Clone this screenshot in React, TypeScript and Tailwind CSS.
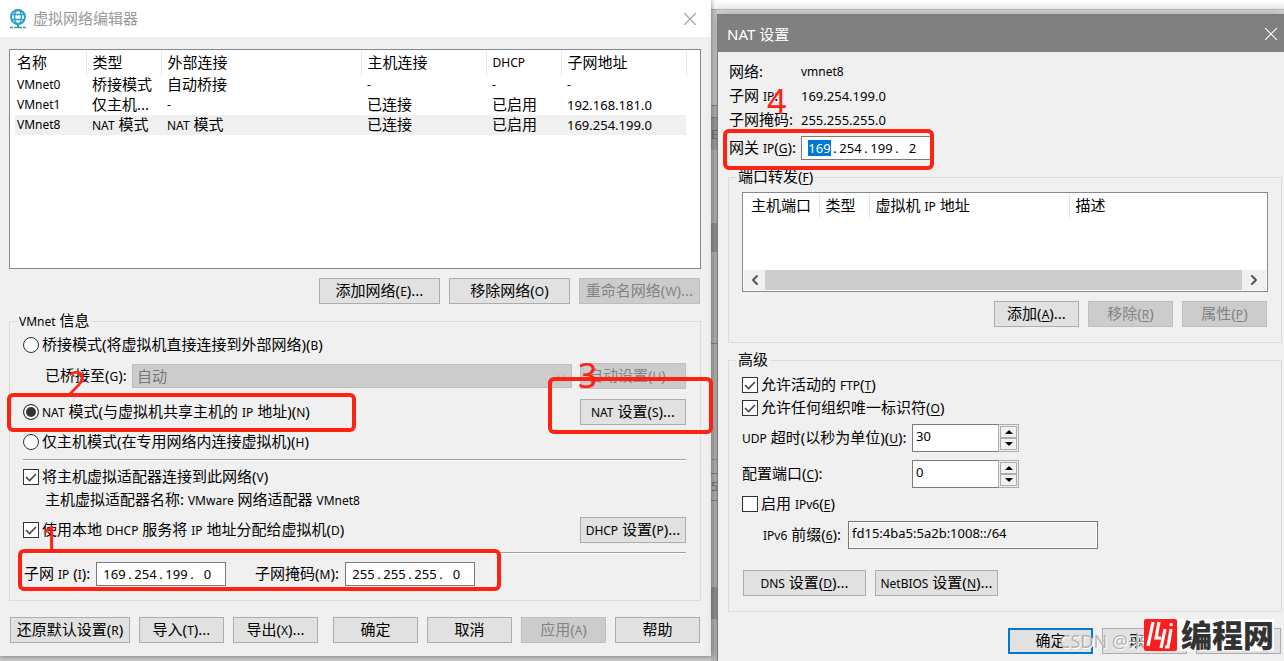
import type { ReactNode } from "react";
import { ChevronDown, ChevronLeft, ChevronRight } from "lucide-react";
import clsx from "clsx";

const adapters = [
  ["VMnet0", "桥接模式", "自动桥接", "-", "-", "-"],
  ["VMnet1", "仅主机...", "-", "已连接", "已启用", "192.168.181.0"],
  ["VMnet8", "NAT 模式", "NAT 模式", "已连接", "已启用", "169.254.199.0"],
];

const adapterColumns = [
  { label: "名称", width: "w-[71px]" },
  { label: "类型", width: "w-[75px]" },
  { label: "外部连接", width: "w-[200px]" },
  { label: "主机连接", width: "w-[125px]" },
  { label: "DHCP", width: "w-[75px]" },
  { label: "子网地址", width: "w-[125px]" },
];

// Chinese runs and punctuation are set larger than Latin ones; "&X" marks an access key
function Txt({ children }: { children: string }) {
  const parts = children.split(/([\u4e00-\u9fff(): ]+|\.{3}|&\w|\d[\d.]{6,})/).filter(Boolean);
  return (
    <span className="leading-4 whitespace-pre">
      {parts.map((part, i) => {
        if (part.startsWith("&")) return <u key={i} className="underline-offset-2">{part.slice(1)}</u>;
        if (/^[\u4e00-\u9fff(): .]/.test(part)) return <span key={i} className="text-[15px] leading-4">{part}</span>;
        if (/^\d[\d.]{6,}/.test(part)) return <span key={i} className="text-[13px] leading-4">{part}</span>;
        return part;
      })}
    </span>
  );
}

interface ButtonProps {
  children: string;
  className?: string;
  disabled?: boolean;
  primary?: boolean;
}

function Button({ children, className = "w-[85px]", disabled, primary }: ButtonProps) {
  return (
    <button
      type="button"
      disabled={disabled}
      className={clsx(
        "flex h-[26px] shrink-0 items-center justify-center",
        primary ? "border-2 border-[#0078d7]" : "border",
        disabled
          ? "border-[#bfbfbf] bg-[#cccccc] text-[#838383]"
          : "bg-[#e1e1e1]",
        !disabled && !primary && "border-[#adadad]",
        className,
      )}
    >
      <Txt>{children}</Txt>
    </button>
  );
}

function Radio({ children, checked }: { children: string; checked?: boolean }) {
  return (
    <label className="flex items-center gap-[3px]">
      <input
        type="radio"
        name="mode"
        defaultChecked={checked}
        className="size-4 shrink-0 appearance-none rounded-full border border-[#333333] bg-white checked:bg-[#333333] checked:shadow-[inset_0_0_0_2px_white]"
      />
      <Txt>{children}</Txt>
    </label>
  );
}

function Check({ children, checked }: { children: string; checked?: boolean }) {
  return (
    <label className="flex items-center gap-[3px]">
      <span className="relative size-4 shrink-0">
        <input
          type="checkbox"
          defaultChecked={checked}
          className="peer block size-4 appearance-none border border-[#333333] bg-white"
        />
        <svg
          viewBox="0 0 16 16"
          className="pointer-events-none absolute inset-0 hidden size-4 peer-checked:block"
        >
          <path d="M3 8l3.5 3.5L13 5" fill="none" stroke="#444" strokeWidth="1.6" />
        </svg>
      </span>
      <Txt>{children}</Txt>
    </label>
  );
}

interface IpBoxProps {
  id: string;
  value: string;
  selected?: number;
}

function IpBox({ id, value, selected }: IpBoxProps) {
  return (
    <div className="flex h-6 w-[130px] shrink-0 items-center border border-[#7a7a7a] bg-white pl-1 text-[13px] leading-4">
      {value.split(".").map((octet, i) => (
        <div key={i} className="flex items-center">
          {i > 0 && <span className="w-1 text-center">.</span>}
          <input
            id={i === 0 ? id : undefined}
            aria-label={i === 0 ? undefined : `${id} ${i + 1}`}
            defaultValue={octet}
            className={clsx(
              "mx-0.5 h-4 w-[23px] text-center leading-4 outline-none",
              selected === i && "bg-[#0078d7] text-white",
            )}
          />
        </div>
      ))}
    </div>
  );
}

function Spinner({ id, value }: { id: string; value: string }) {
  return (
    <div className="flex h-7 w-[107px]">
      <input
        id={id}
        defaultValue={value}
        className="min-w-0 flex-1 border border-r-0 border-[#7a7a7a] bg-white pb-1 pl-[3px] text-[13px] outline-none"
      />
      <div className="flex w-[21px] flex-col border border-[#abadb3] p-px">
        <button type="button" aria-label="+" className="flex flex-1 items-center justify-center border border-[#acacac]">
          <svg viewBox="0 0 8 4" className="h-1 w-2"><path d="M0 4L4 0l4 4z" /></svg>
        </button>
        <button type="button" aria-label="-" className="flex flex-1 items-center justify-center border border-[#acacac]">
          <svg viewBox="0 0 8 4" className="h-1 w-2"><path d="M0 0l4 4 4-4z" /></svg>
        </button>
      </div>
    </div>
  );
}

function Group({ title, className, children }: { title: string; className?: string; children: ReactNode }) {
  return (
    <fieldset className={clsx("min-w-0 border border-[#dcdcdc]", className)}>
      <legend className="-ml-1.5 flex h-5 items-center px-0.5">
        <Txt>{title}</Txt>
      </legend>
      {children}
    </fieldset>
  );
}

function CloseIcon() {
  return (
    <svg viewBox="0 0 12 12" className="size-3">
      <path d="M0 0l12 12M12 0L0 12" stroke="currentColor" strokeWidth="1.1" />
    </svg>
  );
}

function GlobeIcon() {
  return (
    <svg viewBox="0 0 18 20" className="h-5 w-[18px]" fill="none" stroke="#2a9fd0">
      <circle cx="9" cy="8" r="7" strokeWidth="2" />
      <ellipse cx="9" cy="8" rx="3.4" ry="7" strokeWidth="1.4" />
      <path d="M2.5 5.5h13M2.5 10.5h13" strokeWidth="1.4" />
      <path d="M9 15v3" strokeWidth="2" />
      <path d="M1 18.5h3M5 18.5h8M14 18.5h3" stroke="#2ba88c" strokeWidth="1.5" />
    </svg>
  );
}

function Divider() {
  return <hr className="h-0.5 border-t border-b border-t-[#a0a0a0] border-b-white" />;
}

function Mark({ className }: { className: string }) {
  return (
    <div className={clsx("pointer-events-none absolute z-20 rounded-md border-4 border-[#ff2112]", className)} />
  );
}

function MarkNumber({ children, className }: { children: string; className: string }) {
  return (
    <span className={clsx("pointer-events-none absolute z-20 text-[34px] leading-[34px] text-[#ff2112]", className)}>
      {children}
    </span>
  );
}

function NetworkEditor() {
  return (
    <section className="relative min-w-0 self-start bg-[#f0f0f0] shadow-[0_0_6px_rgba(0,0,0,0.5)]">
      <header className="flex h-[37px] items-center bg-white pr-[15px] pl-[9px] text-[#999999]">
        <GlobeIcon />
        <h1 className="ml-1.5 flex-1"><Txt>虚拟网络编辑器</Txt></h1>
        <button type="button" aria-label="关闭"><CloseIcon /></button>
      </header>

      <div className="pt-3 pr-2.5 pb-[13px] pl-[9px]">
        <div className="h-[220px] border border-[#828790] bg-white pt-px pr-3.5 pl-[5px]">
          <table className="w-full table-fixed text-left leading-4">
            <thead>
              <tr className="h-6">
                {adapterColumns.map(({ label, width }, i) => (
                  <th
                    key={label}
                    className={clsx("border-r border-[#e5e5e5] font-normal", i === 0 ? "pl-0.5" : "pl-1.5", width)}
                  >
                    <Txt>{label}</Txt>
                  </th>
                ))}
              </tr>
            </thead>
            <tbody>
              {adapters.map((row) => (
                <tr key={row[0]} className={clsx("h-5", row[0] === "VMnet8" && "bg-[#f0f0f0]")}>
                  {row.map((cell, i) => (
                    <td key={i} className={i === 0 ? "pl-0.5" : "pl-1.5"}>
                      <Txt>{cell}</Txt>
                    </td>
                  ))}
                </tr>
              ))}
            </tbody>
          </table>
        </div>

        <div className="mt-[9px] flex justify-end gap-[9px] pr-px">
          <Button className="w-[121px]">添加网络(E)...</Button>
          <Button className="w-[121px]">移除网络(O)</Button>
          <Button className="w-[121px]" disabled>重命名网络(W)...</Button>
        </div>

        <Group title="VMnet 信息" className="mt-[7px] pr-3.5 pb-3.5 pl-[13px]">
          <div className="mt-0.5 flex h-6 items-center">
            <Radio>桥接模式(将虚拟机直接连接到外部网络)(B)</Radio>
          </div>
          <div className="mt-1.5 flex h-[26px] items-center">
            <label htmlFor="bridge" className="w-[109px] shrink-0 pl-[22px]"><Txt>已桥接至(G):</Txt></label>
            <div className="relative min-w-0 flex-1">
              <select
                id="bridge"
                disabled
                className="block h-6 w-full appearance-none border border-[#bfbfbf] bg-[#cccccc] pl-1 text-[15px] leading-5 text-[#777777] opacity-100"
              >
                <option>自动</option>
              </select>
              <ChevronDown className="absolute top-1.5 right-1 size-3.5 text-[#a0a0a0]" strokeWidth={1.5} />
            </div>
            <Button className="ml-2 w-[106px]" disabled>自动设置(U)...</Button>
          </div>
          <div className="mt-2.5 flex h-[26px] items-center justify-between">
            <Radio checked>NAT 模式(与虚拟机共享主机的 IP 地址)(N)</Radio>
            <Button className="w-[106px]">NAT 设置(S)...</Button>
          </div>
          <div className="mt-[5px] mb-[5px] flex h-6 items-center">
            <Radio>仅主机模式(在专用网络内连接虚拟机)(H)</Radio>
          </div>
          <Divider />
          <div className="mt-1 flex h-6 items-center">
            <Check checked>将主机虚拟适配器连接到此网络(V)</Check>
          </div>
          <p className="flex h-[22px] items-center pl-[22px]">
            <Txt>主机虚拟适配器名称: VMware 网络适配器 VMnet8</Txt>
          </p>
          <div className="mt-1.5 mb-[9px] flex h-[26px] items-center justify-between">
            <Check checked>使用本地 DHCP 服务将 IP 地址分配给虚拟机(D)</Check>
            <Button className="w-[106px]">DHCP 设置(P)...</Button>
          </div>
          <Divider />
          <div className="mt-2 flex h-6 items-center">
            <label htmlFor="subnet-ip" className="w-[73px] pl-px"><Txt>子网 IP (I):</Txt></label>
            <IpBox id="subnet-ip" value="169.254.199.0" />
            <label htmlFor="subnet-mask" className="ml-[29px] w-[90px]"><Txt>子网掩码(M):</Txt></label>
            <IpBox id="subnet-mask" value="255.255.255.0" />
          </div>
        </Group>

        <div className="mt-4 flex gap-[9px] pl-px">
          <Button className="w-[120px]">还原默认设置(R)</Button>
          <Button>导入(T)...</Button>
          <Button>导出(X)...</Button>
          <div className="ml-auto flex gap-[9px] pr-px">
            <Button>确定</Button>
            <Button>取消</Button>
            <Button disabled>应用(A)</Button>
            <Button>帮助</Button>
          </div>
        </div>
      </div>

      <Mark className="top-[549px] left-[18px] h-[42px] w-[483px]" />
      <MarkNumber className="top-[521px] left-[41px]">1</MarkNumber>
      <Mark className="top-[393px] left-[7px] h-[39px] w-[349px]" />
      <MarkNumber className="top-[366px] left-[67px]">2</MarkNumber>
      <Mark className="top-[377px] -right-0.5 h-[57px] w-[165px]" />
      <MarkNumber className="top-[358px] left-[578px]">3</MarkNumber>
    </section>
  );
}

// Slice of the darkened parent window seen between the two dialogs
function Backdrop() {
  return (
    <div className="flex flex-col overflow-hidden bg-[#bbbbbb] text-[13px] text-[#777777]">
      <div className="h-[9px] bg-white" />
      <div className="h-24 border-t border-[#aaaaaa] bg-[#cfcfcf]" />
      <div className="h-[13px] border-y border-[#888888]" />
      <div className="h-8 bg-[#a5a5a5] leading-8">E</div>
      <div className="h-[73px]" />
      <div className="h-[29px] bg-[#999999]" />
      <div className="h-[92px] border-b border-[#888888]" />
      <div className="h-[116px] border-b border-[#999999]" />
      <div className="h-[13px]" />
      <div className="h-7 border-y border-[#888888] leading-6">5</div>
      <div className="h-[86px]" />
      <div className="h-8 bg-[#999999]" />
    </div>
  );
}

function NatSettings() {
  return (
    <section className="relative flex flex-1 flex-col border-t border-l border-[#7a7a7a] bg-[#f0f0f0] shadow-[0_0_10px_rgba(0,0,0,0.25)]">
      <header className="flex h-[37px] items-center justify-between bg-[#808080] pr-[7px] pl-[9px] text-[15px] leading-4 text-white">
        <h2>NAT 设置</h2>
        <button type="button" aria-label="关闭"><CloseIcon /></button>
      </header>

      <div className="pt-2 pr-0.5 pb-[7px] pl-2.5">
        <dl className="grid grid-cols-[72px_1fr] auto-rows-[24px] items-center pl-px">
          <dt><Txt>网络:</Txt></dt>
          <dd>vmnet8</dd>
          <dt><Txt>子网 IP:</Txt></dt>
          <dd><Txt>169.254.199.0</Txt></dd>
          <dt><Txt>子网掩码:</Txt></dt>
          <dd><Txt>255.255.255.0</Txt></dd>
        </dl>
        <div className="mt-1 flex items-center pl-px">
          <label htmlFor="gateway" className="w-[72px]"><Txt>网关 IP(&G):</Txt></label>
          <IpBox id="gateway" value="169.254.199.2" selected={0} />
        </div>

        <Group title="端口转发(&F)" className="mt-[7px] px-[13px] pb-[15px]">
          <div className="mt-[5px] flex h-[100px] flex-col border border-[#828790] bg-white p-px">
            <table className="w-full table-fixed text-left leading-4">
              <thead>
                <tr className="h-6">
                  <th className="w-[75px] border-r border-[#e5e5e5] pl-[7px] font-normal"><Txt>主机端口</Txt></th>
                  <th className="w-[50px] border-r border-[#e5e5e5] pl-1.5 font-normal"><Txt>类型</Txt></th>
                  <th className="w-[200px] border-r border-[#e5e5e5] pl-1.5 font-normal"><Txt>虚拟机 IP 地址</Txt></th>
                  <th className="pl-1.5 font-normal"><Txt>描述</Txt></th>
                </tr>
              </thead>
            </table>
            <div className="mt-auto flex h-5 bg-[#f0f0f0] text-[#555555]">
              <button type="button" aria-label="左" className="flex w-[21px] items-center justify-center">
                <ChevronLeft className="size-4" strokeWidth={3} />
              </button>
              <div className="flex-1 bg-[#cdcdcd]" />
              <button type="button" aria-label="右" className="flex w-6 items-center justify-center">
                <ChevronRight className="size-4" strokeWidth={3} />
              </button>
            </div>
          </div>
          <div className="mt-[9px] flex justify-end gap-[9px] pr-px">
            <Button>添加(&A)...</Button>
            <Button disabled>移除(&R)</Button>
            <Button disabled>属性(&P)</Button>
          </div>
        </Group>

        <Group title="高级" className="mt-[7px] px-[13px] pb-[15px]">
          <div className="mt-[3px] flex h-[23px] items-center">
            <Check checked>允许活动的 FTP(&T)</Check>
          </div>
          <div className="flex h-[23px] items-center">
            <Check checked>允许任何组织唯一标识符(&O)</Check>
          </div>
          <div className="mt-[5px] flex items-center">
            <label htmlFor="udp" className="w-[170px]"><Txt>UDP 超时(以秒为单位)(&U):</Txt></label>
            <Spinner id="udp" value="30" />
          </div>
          <div className="mt-2 flex items-center">
            <label htmlFor="port" className="w-[170px]"><Txt>配置端口(&C):</Txt></label>
            <Spinner id="port" value="0" />
          </div>
          <div className="mt-1 flex h-6 items-center">
            <Check>启用 IPv6(&E)</Check>
          </div>
          <div className="mt-[5px] flex items-center">
            <label htmlFor="prefix" className="w-[106px] pl-[21px]"><Txt>IPv6 前缀(&6):</Txt></label>
            <input
              id="prefix"
              readOnly
              defaultValue="fd15:4ba5:5a2b:1008::/64"
              className="h-7 w-[250px] border border-[#7a7a7a] pb-1 pl-[3px] text-[13px] shadow-[inset_0_0_0_1px_white] outline-none"
            />
          </div>
          <div className="mt-[21px] flex gap-[9px] pl-px">
            <Button className="w-[123px]">DNS 设置(&D)...</Button>
            <Button className="w-[123px]">NetBIOS 设置(&N)...</Button>
          </div>
        </Group>

        <div className="mt-4 flex justify-end gap-[9px] pr-px">
          <Button primary>确定</Button>
          <Button>取消</Button>
          <Button>帮助</Button>
        </div>
      </div>

      <Mark className="top-[114px] left-[5px] h-[41px] w-[211px]" />
      <MarkNumber className="top-[69px] left-[49px]">4</MarkNumber>

      <div className="pointer-events-none absolute right-2.5 bottom-2.5 flex h-8 items-center">
        <span className="absolute right-[128px] -bottom-1 text-lg whitespace-nowrap text-[#999999]/70 [text-shadow:1px_1px_0_#ffffff]">
          CSDN @来
        </span>
        <svg viewBox="0 0 33 32" className="relative h-8 w-[33px]">
          <rect width="33" height="32" rx="2" fill="#ff1c1c" />
          <g fill="none" stroke="#fff" strokeWidth="3.2">
            <path d="M9 3L4 27" />
            <path d="M15 3l-3 16h5" />
            <path d="M21 10l-4 19" />
            <path d="M27 10l-3 18h-3" />
            <path d="M27.500 4l-.6 3" />
          </g>
        </svg>
        <span className="relative h-8 bg-white pl-1 text-[31px] leading-8 font-black text-[#333333]">编程网</span>
      </div>
    </section>
  );
}

export default function App() {
  return (
    <main className="grid min-h-screen grid-cols-[minmax(0,711fr)_6px_minmax(0,567fr)] overflow-hidden bg-[#cccccc] font-['Noto_Sans','Noto_Sans_CJK_SC',sans-serif] text-xs leading-4 text-black">
      <NetworkEditor />
      <Backdrop />
      <div className="flex flex-col">
        <div className="h-[9px] bg-linear-to-b from-white to-[#eeeeee]" />
        <div className="h-[5px] border-t border-[#bbbbbb] bg-[#d8d8d8]" />
        <NatSettings />
      </div>
    </main>
  );
}
